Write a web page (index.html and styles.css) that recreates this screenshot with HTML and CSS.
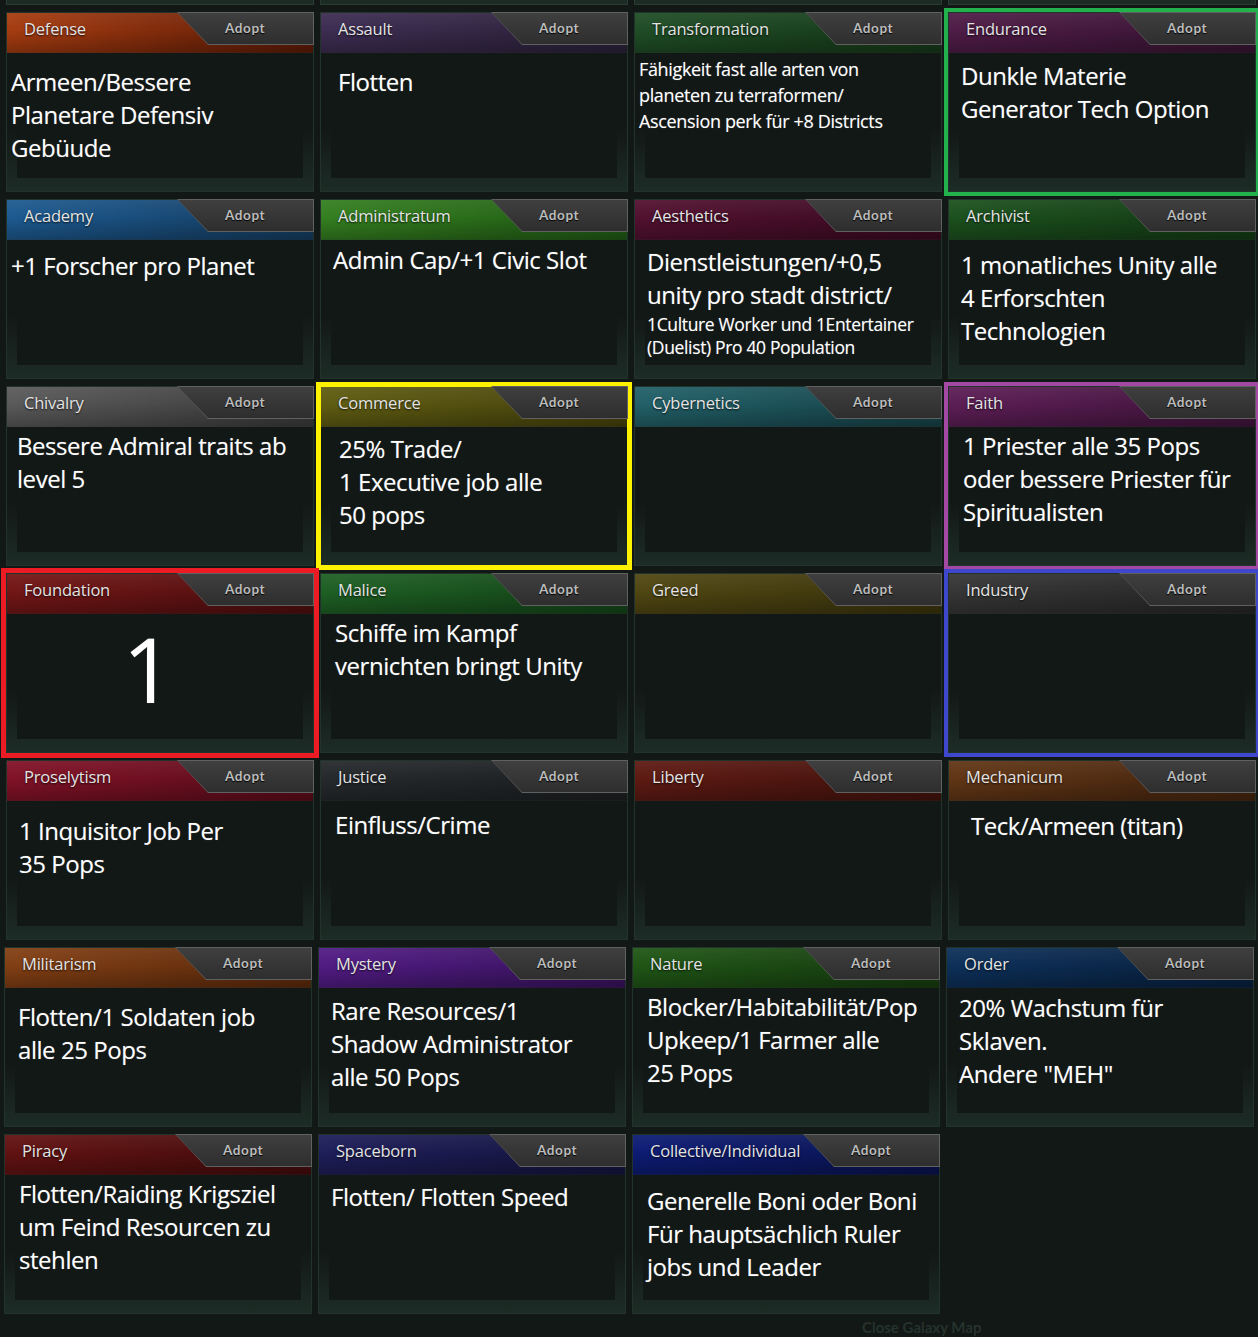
FILE: index.html
```html
<!DOCTYPE html>
<html>
<head>
<meta charset="utf-8">
<link rel="stylesheet" href="styles.css">
</head>
<body>
<div class="page">
  <div class="stubs"><div class="stub"></div><div class="stub"></div><div class="stub"></div><div class="stub"></div></div>
  <div class="grid">
    <!-- row 1 -->
    <div class="card h-defense">
      <div class="head"><span class="title">Defense</span><div class="adopt"><div class="adopt-in">Adopt</div></div></div>
      <div class="body l4 t14">Armeen/Bessere<br>Planetare Defensiv<br>Gebüude</div>
    </div>
    <div class="card h-assault">
      <div class="head"><span class="title">Assault</span><div class="adopt"><div class="adopt-in">Adopt</div></div></div>
      <div class="body l17 t14">Flotten</div>
    </div>
    <div class="card h-transformation">
      <div class="head"><span class="title">Transformation</span><div class="adopt"><div class="adopt-in">Adopt</div></div></div>
      <div class="body small l4 t4">Fähigkeit fast alle arten von<br>planeten zu terraformen/<br>Ascension perk für +8 Districts</div>
    </div>
    <div class="card h-endurance hl hl-green">
      <div class="head"><span class="title">Endurance</span><div class="adopt"><div class="adopt-in">Adopt</div></div></div>
      <div class="body l12 t9">Dunkle Materie<br>Generator Tech Option</div>
    </div>
    <!-- row 2 -->
    <div class="card h-academy">
      <div class="head"><span class="title">Academy</span><div class="adopt"><div class="adopt-in">Adopt</div></div></div>
      <div class="body l4 t12">+1 Forscher pro Planet</div>
    </div>
    <div class="card h-administratum">
      <div class="head"><span class="title">Administratum</span><div class="adopt"><div class="adopt-in">Adopt</div></div></div>
      <div class="body l12 t6">Admin Cap/+1 Civic Slot</div>
    </div>
    <div class="card h-aesthetics">
      <div class="head"><span class="title">Aesthetics</span><div class="adopt"><div class="adopt-in">Adopt</div></div></div>
      <div class="body l12 t8">Dienstleistungen/+0,5<br>unity pro stadt district/<div class="sub">1Culture Worker und 1Entertainer<br>(Duelist) Pro 40 Population</div></div>
    </div>
    <div class="card h-archivist">
      <div class="head"><span class="title">Archivist</span><div class="adopt"><div class="adopt-in">Adopt</div></div></div>
      <div class="body l12 t11">1 monatliches Unity alle<br>4 Erforschten<br>Technologien</div>
    </div>
    <!-- row 3 -->
    <div class="card h-chivalry">
      <div class="head"><span class="title">Chivalry</span><div class="adopt"><div class="adopt-in">Adopt</div></div></div>
      <div class="body l10 t5">Bessere Admiral traits ab<br>level 5</div>
    </div>
    <div class="card h-commerce hl hl-yellow">
      <div class="head"><span class="title">Commerce</span><div class="adopt"><div class="adopt-in">Adopt</div></div></div>
      <div class="body l18 t8">25% Trade/<br>1 Executive job alle<br>50 pops</div>
    </div>
    <div class="card h-cybernetics">
      <div class="head"><span class="title">Cybernetics</span><div class="adopt"><div class="adopt-in">Adopt</div></div></div>
      <div class="body"></div>
    </div>
    <div class="card h-faith hl hl-purple">
      <div class="head"><span class="title">Faith</span><div class="adopt"><div class="adopt-in">Adopt</div></div></div>
      <div class="body l14 t5">1 Priester alle 35 Pops<br>oder bessere Priester für<br>Spiritualisten</div>
    </div>
    <!-- row 4 -->
    <div class="card h-foundation hl hl-red">
      <div class="head"><span class="title">Foundation</span><div class="adopt"><div class="adopt-in">Adopt</div></div></div>
      <div class="body big">1</div>
    </div>
    <div class="card h-malice">
      <div class="head"><span class="title">Malice</span><div class="adopt"><div class="adopt-in">Adopt</div></div></div>
      <div class="body l14 t4">Schiffe im Kampf<br>vernichten bringt Unity</div>
    </div>
    <div class="card h-greed">
      <div class="head"><span class="title">Greed</span><div class="adopt"><div class="adopt-in">Adopt</div></div></div>
      <div class="body"></div>
    </div>
    <div class="card h-industry hl hl-blue">
      <div class="head"><span class="title">Industry</span><div class="adopt"><div class="adopt-in">Adopt</div></div></div>
      <div class="body"></div>
    </div>
    <!-- row 5 -->
    <div class="card h-proselytism">
      <div class="head"><span class="title">Proselytism</span><div class="adopt"><div class="adopt-in">Adopt</div></div></div>
      <div class="body l12 t16">1 Inquisitor Job Per<br>35 Pops</div>
    </div>
    <div class="card h-justice">
      <div class="head"><span class="title">Justice</span><div class="adopt"><div class="adopt-in">Adopt</div></div></div>
      <div class="body l14 t10">Einfluss/Crime</div>
    </div>
    <div class="card h-liberty">
      <div class="head"><span class="title">Liberty</span><div class="adopt"><div class="adopt-in">Adopt</div></div></div>
      <div class="body"></div>
    </div>
    <div class="card h-mechanicum">
      <div class="head"><span class="title">Mechanicum</span><div class="adopt"><div class="adopt-in">Adopt</div></div></div>
      <div class="body l22 t11">Teck/Armeen (titan)</div>
    </div>
    <!-- row 6 -->
    <div class="card shift h-militarism">
      <div class="head"><span class="title">Militarism</span><div class="adopt"><div class="adopt-in">Adopt</div></div></div>
      <div class="body l13 t15">Flotten/1 Soldaten job<br>alle 25 Pops</div>
    </div>
    <div class="card shift h-mystery">
      <div class="head"><span class="title">Mystery</span><div class="adopt"><div class="adopt-in">Adopt</div></div></div>
      <div class="body l12 t9">Rare Resources/1<br>Shadow Administrator<br>alle 50 Pops</div>
    </div>
    <div class="card shift h-nature">
      <div class="head"><span class="title">Nature</span><div class="adopt"><div class="adopt-in">Adopt</div></div></div>
      <div class="body l14 t5">Blocker/Habitabilität/Pop<br>Upkeep/1 Farmer alle<br>25 Pops</div>
    </div>
    <div class="card shift h-order">
      <div class="head"><span class="title">Order</span><div class="adopt"><div class="adopt-in">Adopt</div></div></div>
      <div class="body l12 t6">20% Wachstum für<br>Sklaven.<br>Andere "MEH"</div>
    </div>
    <!-- row 7 -->
    <div class="card shift h-piracy">
      <div class="head"><span class="title">Piracy</span><div class="adopt"><div class="adopt-in">Adopt</div></div></div>
      <div class="body l14 t5">Flotten/Raiding Krigsziel<br>um Feind Resourcen zu<br>stehlen</div>
    </div>
    <div class="card shift h-spaceborn">
      <div class="head"><span class="title">Spaceborn</span><div class="adopt"><div class="adopt-in">Adopt</div></div></div>
      <div class="body l12 t8">Flotten/ Flotten Speed</div>
    </div>
    <div class="card shift h-collective">
      <div class="head"><span class="title">Collective/Individual</span><div class="adopt"><div class="adopt-in">Adopt</div></div></div>
      <div class="body l14 t12">Generelle Boni oder Boni<br>Für hauptsächlich Ruler<br>jobs und Leader</div>
    </div>
    <div class="blank"></div>
  </div>
  <div class="footer"><span class="close-map">Close Galaxy Map</span></div>
</div>
</body>
</html>
```

FILE: styles.css
```css
* { box-sizing: border-box; }

html, body {
  margin: 0;
  padding: 0;
}

body {
  width: 1258px;
  height: 1337px;
  overflow: hidden;
  background: #111815;
  font-family: "Open Sans", "Noto Sans", sans-serif;
  color: #fff;
}

.page {
  padding-left: 6px;
}

.stubs {
  display: grid;
  grid-template-columns: repeat(4, 308px);
  column-gap: 6px;
  height: 5px;
  margin-bottom: 7px;
}

.stub {
  background: #1d2b25;
  border: 1px solid #283a32;
  border-top: none;
}

.grid {
  display: grid;
  grid-template-columns: repeat(4, 308px);
  grid-auto-rows: 180px;
  column-gap: 6px;
  row-gap: 7px;
}

.card {
  display: flex;
  flex-direction: column;
  border: 1px solid #22332c;
  background: #15201c;
}

.card.shift {
  margin-left: -2px;
  margin-right: 2px;
}

.head {
  height: 40px;
  flex: none;
  display: flex;
  align-items: flex-start;
  justify-content: space-between;
  background:
    linear-gradient(to bottom, rgba(255,255,255,0.06) 0%, rgba(0,0,0,0) 45%, rgba(0,0,0,0.25) 100%),
    linear-gradient(to right, var(--c1) 0%, var(--c2) 100%);
  border-bottom: 1px solid rgba(0,0,0,0.35);
}

.title {
  padding-left: 17px;
  line-height: 32px;
  font-size: 16.5px;
  color: #e4e4e4;
  letter-spacing: -0.2px;
  text-shadow: 0 1px 2px rgba(0,0,0,0.8);
  white-space: nowrap;
}

.adopt {
  flex: none;
  width: 137px;
  height: 33px;
  margin-top: -1px;
  margin-right: -1px;
  background: #606060;
  clip-path: polygon(0 0, 100% 0, 100% 100%, 31px 100%);
}

.adopt-in {
  margin: 1px 1px 1px 1px;
  height: 31px;
  padding-left: 47px;
  line-height: 30px;
  font-family: "Lato", "Open Sans", sans-serif;
  font-size: 13.5px;
  font-weight: 700;
  letter-spacing: 0.6px;
  color: #bdbdbd;
  text-shadow: 0 1px 1px #000;
  background: linear-gradient(to bottom, #3f3f3f 0%, #2e2e2e 100%);
  clip-path: polygon(0 0, 100% 0, 100% 100%, 30px 100%);
}

.body {
  flex: 1;
  font-size: 24px;
  line-height: 33px;
  letter-spacing: -0.45px;
  white-space: nowrap;
  color: #ffffff;
  text-shadow: 0 0 1px rgba(255,255,255,0.35);
  background:
    linear-gradient(#121816, #121816) 10px 0 / calc(100% - 20px) calc(100% - 13px) no-repeat,
    linear-gradient(to bottom, #121816 0%, #121816 55%, #1d2c26 100%);
}

.body.small {
  font-size: 18px;
  line-height: 26px;
  letter-spacing: -0.35px;
}

.sub {
  font-size: 17.5px;
  line-height: 23px;
  letter-spacing: -0.35px;
  margin-top: 2px;
}

.body.big {
  font-size: 90px;
  line-height: 90px;
  padding-top: 9px;
  padding-right: 24px;
  text-align: center;
}

/* text offsets */
.l4 { padding-left: 4px; }
.l10 { padding-left: 10px; }
.l12 { padding-left: 12px; }
.l13 { padding-left: 13px; }
.l14 { padding-left: 14px; }
.l17 { padding-left: 17px; }
.l18 { padding-left: 18px; }
.l22 { padding-left: 22px; }
.t4 { padding-top: 2px; }
.t5 { padding-top: 2px; }
.t6 { padding-top: 3px; }
.t8 { padding-top: 5px; }
.t9 { padding-top: 6px; }
.t10 { padding-top: 7px; }
.t11 { padding-top: 8px; }
.t12 { padding-top: 9px; }
.t14 { padding-top: 12px; }
.t15 { padding-top: 12px; }
.t16 { padding-top: 13px; }
.body.small.t4 { padding-top: 3px; }

/* highlight frames */
.hl { position: relative; z-index: 2; }
.hl-green { outline: 4px solid #22b14c; }
.hl-yellow { outline: 5px solid #fff200; outline-offset: -1px; }
.hl-purple { outline: 4px solid #a349a4; }
.hl-red { outline: 5px solid #ed1c24; }
.hl-blue { outline: 4px solid #3f48cc; }

/* header colours */
.h-defense { --c1: #a63c10; --c2: #5c1a06; }
.h-assault { --c1: #3d2d52; --c2: #2a2038; }
.h-transformation { --c1: #1f4d26; --c2: #163818; }
.h-endurance { --c1: #4f1c47; --c2: #371432; }
.h-academy { --c1: #1d5a90; --c2: #143c60; }
.h-administratum { --c1: #347f20; --c2: #205a14; }
.h-aesthetics { --c1: #521130; --c2: #3a0a20; }
.h-archivist { --c1: #1c511e; --c2: #133a14; }
.h-chivalry { --c1: #5a5a5a; --c2: #3a3a3a; }
.h-commerce { --c1: #5f5c12; --c2: #46420c; }
.h-cybernetics { --c1: #226068; --c2: #164248; }
.h-faith { --c1: #5c1e55; --c2: #40143c; }
.h-foundation { --c1: #731616; --c2: #4e0e0e; }
.h-malice { --c1: #1e6024; --c2: #144418; }
.h-greed { --c1: #504712; --c2: #3a330c; }
.h-industry { --c1: #363636; --c2: #262626; }
.h-proselytism { --c1: #821227; --c2: #5a0c1a; }
.h-justice { --c1: #25292c; --c2: #1c1f21; }
.h-liberty { --c1: #5e1a13; --c2: #42120c; }
.h-mechanicum { --c1: #613616; --c2: #44240e; }
.h-militarism { --c1: #823f14; --c2: #5c2a0c; }
.h-mystery { --c1: #511c84; --c2: #38125c; }
.h-nature { --c1: #205616; --c2: #163c0f; }
.h-order { --c1: #0d3059; --c2: #08203e; }
.h-piracy { --c1: #621212; --c2: #440c0c; }
.h-spaceborn { --c1: #1e1e5a; --c2: #14143e; }
.h-collective { --c1: #0d1c74; --c2: #0a134e; }

.blank { }

.footer {
  height: 23px;
  display: flex;
  align-items: flex-end;
  padding-left: 856px;
}

.close-map {
  font-family: "Lato", sans-serif;
  font-weight: 700;
  font-size: 15px;
  line-height: 19px;
  color: #26322d;
}
```
